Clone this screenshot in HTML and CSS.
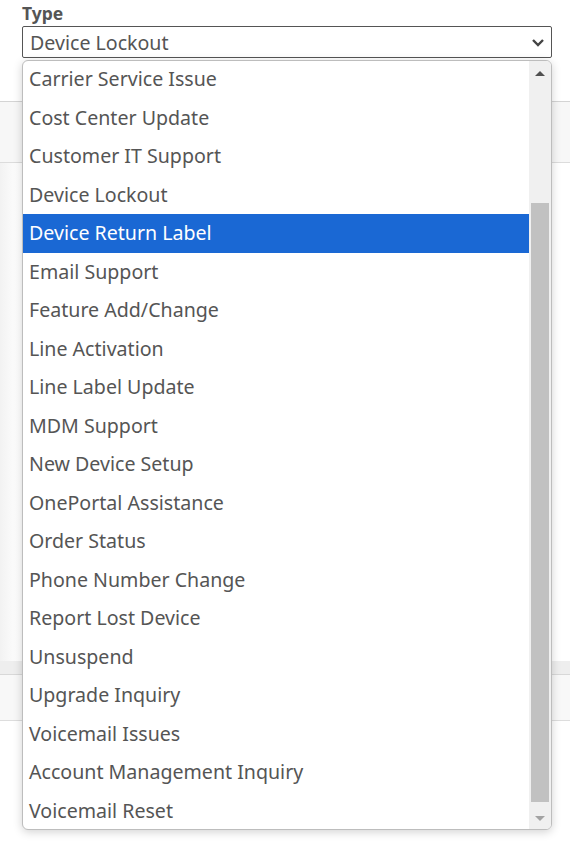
FILE: index.html
```html
<!DOCTYPE html>
<html>
<head>
<meta charset="utf-8">
<link rel="stylesheet" href="styles.css">
</head>
<body>
<div class="page">
  <div class="field">
    <div class="label">Type</div>
    <div class="select">
      <span>Device Lockout</span>
      <svg class="chev" width="14" height="9" viewBox="0 0 14 9"><path d="M2 2 L7 7 L12 2" fill="none" stroke="#444" stroke-width="2.4"/></svg>
    </div>
  </div>
  <div class="bg">
    <div class="band1"></div>
    <div class="gap1"></div>
    <div class="band2"></div>
    <div class="band3"></div>
  </div>
  <div class="dropdown">
    <ul class="options">
      <li>Carrier Service Issue</li>
      <li>Cost Center Update</li>
      <li>Customer IT Support</li>
      <li>Device Lockout</li>
      <li class="sel">Device Return Label</li>
      <li>Email Support</li>
      <li>Feature Add/Change</li>
      <li>Line Activation</li>
      <li>Line Label Update</li>
      <li>MDM Support</li>
      <li>New Device Setup</li>
      <li>OnePortal Assistance</li>
      <li>Order Status</li>
      <li>Phone Number Change</li>
      <li>Report Lost Device</li>
      <li>Unsuspend</li>
      <li>Upgrade Inquiry</li>
      <li>Voicemail Issues</li>
      <li>Account Management Inquiry</li>
      <li>Voicemail Reset</li>
    </ul>
    <div class="scrollbar">
      <div class="arrow up"></div>
      <div class="track"><div class="thumb"></div></div>
      <div class="arrow down"></div>
    </div>
  </div>
</div>
</body>
</html>
```
FILE: styles.css
```css
html, body {
  margin: 0;
  padding: 0;
  background: #ffffff;
  font-family: "Noto Sans", "Open Sans", sans-serif;
  color: #555;
}
.page {
  position: relative;
  width: 570px;
  height: 844px;
  overflow: hidden;
}
.field {
  padding: 3px 18px 0 22px;
  display: flex;
  flex-direction: column;
}
.label {
  font-size: 17.5px;
  font-weight: 700;
  line-height: 21px;
  height: 23px;
  color: #555;
}
.select {
  height: 30px;
  border: 1px solid #555;
  border-radius: 2px;
  display: flex;
  align-items: center;
  justify-content: space-between;
  padding: 0 5px 0 7px;
  font-size: 19.6px;
  color: #555;
}
.chev { margin-right: 1px; }
.bg {
  display: flex;
  flex-direction: column;
  margin-top: 43px;
}
.band1 {
  height: 60px;
  border-top: 1px solid #d4d4d4;
  border-bottom: 1px solid #dcdcdc;
  background: #f7f7f7;
}
.gap1 {
  height: 498px;
  background: linear-gradient(to right, #f2f2f2, #ffffff 20px);
}
.band2 {
  height: 13px;
  background: #eeeeee;
  border-bottom: 1px solid #d8d8d8;
}
.band3 {
  height: 45px;
  background: #f8f8f8;
  border-bottom: 1px solid #dddddd;
}
.dropdown {
  position: absolute;
  left: 22px;
  top: 60px;
  width: 528px;
  height: 768px;
  border: 1px solid #bdbdbd;
  border-radius: 6px;
  background: #fff;
  box-shadow: 0 2px 10px rgba(0,0,0,0.18);
  display: flex;
  overflow: hidden;
}
.options {
  list-style: none;
  margin: -1px 0 0 0;
  padding: 0;
  flex: 1;
}
.options li {
  height: 38.5px;
  line-height: 38.5px;
  padding-left: 6px;
  font-size: 19.6px;
  color: #555;
  white-space: nowrap;
}
.options li.sel {
  background: #1a68d4;
  color: #fff;
}
.scrollbar {
  width: 22px;
  background: #f0f0f0;
  display: flex;
  flex-direction: column;
  align-items: center;
}
.arrow {
  height: 17px;
  width: 100%;
  display: flex;
  align-items: center;
  justify-content: center;
}
.arrow.up::before {
  content: "";
  border-left: 5px solid transparent;
  border-right: 5px solid transparent;
  border-bottom: 5px solid #505050;
  margin-top: 8px;
}
.arrow.down::before {
  content: "";
  border-left: 5px solid transparent;
  border-right: 5px solid transparent;
  border-top: 5px solid #a3a3a3;
  margin-bottom: 4px;
}
.track {
  flex: 1;
  width: 100%;
  display: flex;
  flex-direction: column;
  padding-top: 125px;
  padding-bottom: 10px;
  box-sizing: border-box;
  align-items: center;
}
.thumb {
  flex: 1;
  width: 18px;
  background: #c1c1c1;
}
```
